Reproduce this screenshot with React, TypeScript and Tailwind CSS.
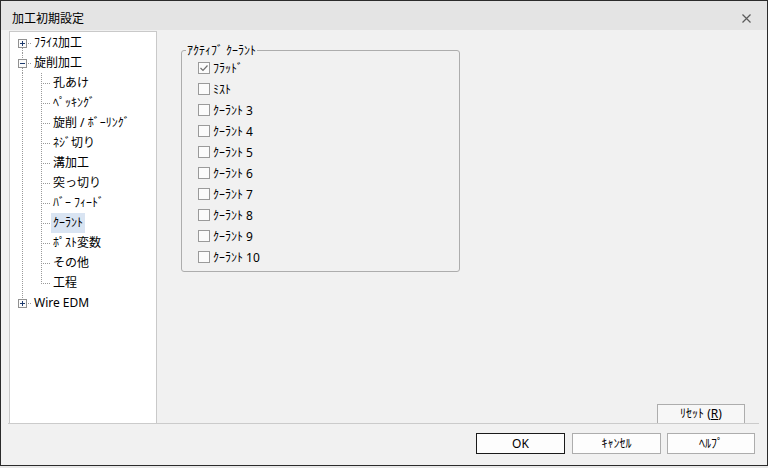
import React from "react";

const dot = { stroke: "#9a9a9a", strokeWidth: 1, strokeDasharray: "1 1" };

function TopRow({ label, expanded, first, last }: { label: string; expanded: boolean; first?: boolean; last?: boolean }) {
  return (
    <div className="flex h-[20px] items-center">
      <svg width="22" height="20" className="shrink-0">
        {!first && <line x1="12.5" y1="0" x2="12.5" y2="6" style={dot} />}
        {!last && <line x1="12.5" y1="15" x2="12.5" y2="20" style={dot} />}
        <line x1="18" y1="10.5" x2="22" y2="10.5" style={dot} />
        <rect x="8.5" y="6.5" width="8" height="8" fill="#fbfbfb" stroke="#919191" />
        <line x1="10" y1="10.5" x2="15" y2="10.5" stroke="#1d3b6e" />
        {!expanded && <line x1="12.5" y1="8" x2="12.5" y2="13" stroke="#1d3b6e" />}
      </svg>
      <span className="px-[2px] leading-[20px]">{label}</span>
    </div>
  );
}

function ChildRow({ label, last, selected }: { label: string; last?: boolean; selected?: boolean }) {
  return (
    <div className="flex h-[20px] items-center">
      <svg width="41" height="20" className="shrink-0">
        <line x1="12.5" y1="0" x2="12.5" y2="20" style={dot} />
        <line x1="31.5" y1="0" x2="31.5" y2={last ? 11 : 20} style={dot} />
        <line x1="33" y1="10.5" x2="41" y2="10.5" style={dot} />
      </svg>
      <span className={`px-[2px] leading-[20px] ${selected ? "bg-[#d9e4f2]" : ""}`}>{label}</span>
    </div>
  );
}

function Check({ label, checked }: { label: string; checked?: boolean }) {
  return (
    <div className="flex h-[21px] items-center gap-[2px]">
      <svg width="13" height="13" className="shrink-0">
        <rect x="0.5" y="0.5" width="11" height="11" fill="#fbfbfb" stroke="#9a9a9a" />
        {checked && <path d="M2.5 6 L5 8.5 L9.5 3.5" fill="none" stroke="#707070" strokeWidth="1.2" />}
      </svg>
      <span className="leading-[21px]">{label}</span>
    </div>
  );
}

const children = ["孔あけ", "ﾍﾟｯｷﾝｸﾞ", "旋削 / ﾎﾞｰﾘﾝｸﾞ", "ﾈｼﾞ切り", "溝加工", "突っ切り", "ﾊﾞｰ ﾌｨｰﾄﾞ", "ｸｰﾗﾝﾄ", "ﾎﾟｽﾄ変数", "その他", "工程"];
const coolants = ["ﾌﾗｯﾄﾞ", "ﾐｽﾄ", "ｸｰﾗﾝﾄ 3", "ｸｰﾗﾝﾄ 4", "ｸｰﾗﾝﾄ 5", "ｸｰﾗﾝﾄ 6", "ｸｰﾗﾝﾄ 7", "ｸｰﾗﾝﾄ 8", "ｸｰﾗﾝﾄ 9", "ｸｰﾗﾝﾄ 10"];

export default function App() {
  return (
    <div className="h-[468px] w-[768px] overflow-hidden bg-[#e8e8e8] font-[family-name:'Noto_Sans','Noto_Sans_CJK_JP',sans-serif] text-[12px] text-black">
      <div className="flex h-[466px] flex-col border border-[#2b2b2b] bg-[#f1f1f1]">
        <div className="flex h-[29px] shrink-0 items-center justify-between bg-[#e4e4e4] pl-[11px] pr-[16px] pt-[6px]">
          <span>加工初期設定</span>
          <svg width="9" height="9" viewBox="0 0 9 9">
            <path d="M0.5 0.5 L8.5 8.5 M8.5 0.5 L0.5 8.5" stroke="#5a5a5a" strokeWidth="1.2" />
          </svg>
        </div>

        <div className="mt-[1px] flex h-[392px] shrink-0">
          <div className="ml-[8px] w-[148px] shrink-0 border-x border-t border-[#c9c9c9] bg-white pt-[1px]">
            <TopRow label="ﾌﾗｲｽ加工" expanded={false} first />
            <TopRow label="旋削加工" expanded />
            {children.map((c, i) => (
              <ChildRow key={c} label={c} last={i === children.length - 1} selected={c === "ｸｰﾗﾝﾄ"} />
            ))}
            <TopRow label="Wire EDM" expanded={false} last />
          </div>

          <div className="flex flex-1 flex-col pl-[24px] pr-[22px]">
            <fieldset className="mt-[12px] w-[279px] rounded-[3px] border border-[#adadad] pb-[3px]">
              <legend className="ml-[4px] px-[1px] leading-[15px]">ｱｸﾃｨﾌﾞ ｸｰﾗﾝﾄ</legend>
              <div className="pl-[16px]">
                {coolants.map((c, i) => (
                  <Check key={c} label={c} checked={i === 0} />
                ))}
              </div>
            </fieldset>
            <div className="mt-auto flex justify-end">
              <div className="flex h-[19px] w-[88px] items-center justify-center border-x border-t border-[#adadad] bg-[#f7f7f7]">
                ﾘｾｯﾄ (<u>R</u>)
              </div>
            </div>
          </div>
        </div>

        <div className="ml-[7px] mr-[8px] h-px shrink-0 bg-[#cbcbcb]" />

        <div className="mr-[12px] mt-[9px] flex justify-end">
          <div className="flex h-[21px] w-[89px] items-center justify-center border border-[#1a1a1a] bg-[#fdfdfd]">OK</div>
          <div className="ml-[7px] flex h-[21px] w-[89px] items-center justify-center border border-[#adadad] bg-[#fdfdfd]">ｷｬﾝｾﾙ</div>
          <div className="ml-[6px] flex h-[21px] w-[88px] items-center justify-center border border-[#adadad] bg-[#fdfdfd]">ﾍﾙﾌﾟ</div>
        </div>
      </div>
    </div>
  );
}
